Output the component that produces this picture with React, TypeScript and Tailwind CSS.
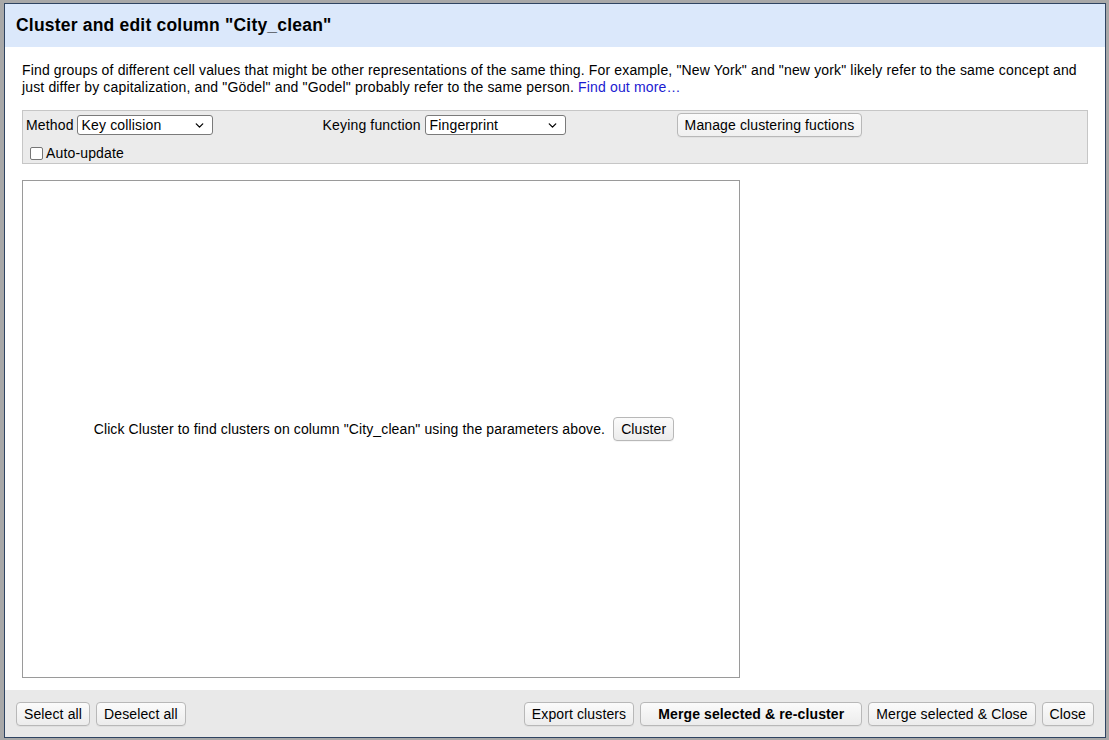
import { ChevronDown } from 'lucide-react';

const btnCls =
  'h-[24px] rounded-[4px] border border-[#b8b8b8] bg-gradient-to-b from-[#fbfbfb] to-[#ececec] px-[7px] text-[14px] leading-none tracking-[0.12px] text-black shadow-[0_1px_0_rgba(0,0,0,0.04)]';

function Select({ value, width }: { value: string; width: string }) {
  return (
    <div
      className={`flex h-[20px] items-center justify-between rounded-[3px] border border-[#7a7a7a] bg-white pl-[4px] pr-[6px] text-[14px] text-black ${width}`}
    >
      <span>{value}</span>
      <ChevronDown size={13} strokeWidth={2.4} />
    </div>
  );
}

export default function App() {
  return (
    <div className="h-[740px] w-[1109px] overflow-hidden bg-[#a8a8a8] font-['Liberation_Sans',Arial,sans-serif] tracking-[0.15px]">
      <div className="ml-[4px] mt-[3px] flex h-[735px] w-[1102px] flex-col border border-[#2f4462] bg-white">
        <div className="flex h-[43px] items-center bg-[#dbe8fb] pl-[11px] text-[17.5px] font-bold tracking-[0.2px] text-black">
          Cluster and edit column "City_clean"
        </div>

        <div className="flex flex-1 flex-col px-[17px] pt-[15px]">
          <p className="pr-[8px] text-[14px] leading-[17px] text-black">
            Find groups of different cell values that might be other representations of the same thing. For example,
            "New York" and "new york" likely refer to the same concept and just differ by capitalization, and "Gödel"
            and "Godel" probably refer to the same person.{' '}
            <span className="text-[#1a1ad1]">Find out more…</span>
          </p>

          <div className="mt-[14px] h-[54px] border border-[#c6c6c6] bg-[#ebebeb] pl-[3px] pt-[2px] text-[14px] text-black">
            <div className="flex items-center">
              <span className="mr-[3px]">Method</span>
              <Select value="Key collision" width="w-[136px]" />
              <span className="ml-[110px] mr-[4px]">Keying function</span>
              <Select value="Fingerprint" width="w-[141px]" />
              <button className={`${btnCls} ml-[111px] rounded-[2px] border-[#7a7a7a] from-[#f4f4f4] to-[#f0f0f0] px-[7px]`}>
                Manage clustering fuctions
              </button>
            </div>
            <label className="mt-[6px] flex items-center pl-[4px]">
              <span className="mr-[3px] inline-block h-[13px] w-[13px] rounded-[2px] border border-[#767676] bg-white" />
              Auto-update
            </label>
          </div>

          <div className="mt-[16px] flex h-[498px] w-[718px] items-center justify-center border border-[#9a9a9a] pl-[6px] text-[14px] tracking-[0.12px] text-black">
            <span>Click Cluster to find clusters on column "City_clean" using the parameters above.</span>
            <button className={`${btnCls} ml-[8px]`}>Cluster</button>
          </div>
        </div>

        <div className="flex h-[47px] items-center bg-[#e9e9e9] px-[11px]">
          <button className={btnCls}>Select all</button>
          <button className={`${btnCls} ml-[6px]`}>Deselect all</button>
          <div className="flex-1" />
          <button className={btnCls}>Export clusters</button>
          <button className={`${btnCls} ml-[6px] px-[17px] font-bold`}>Merge selected &amp; re-cluster</button>
          <button className={`${btnCls} ml-[6px]`}>Merge selected &amp; Close</button>
          <button className={`${btnCls} ml-[6px]`}>Close</button>
        </div>
      </div>
    </div>
  );
}
